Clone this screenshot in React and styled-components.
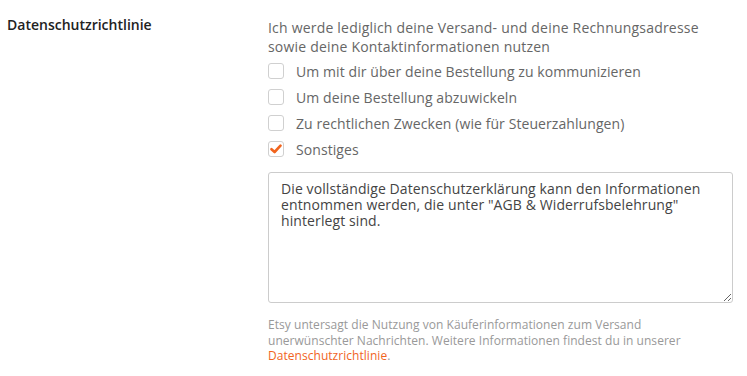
import React, { useState } from "react";
import styled, { createGlobalStyle } from "styled-components";

const GlobalStyle = createGlobalStyle`
  html, body {
    margin: 0;
    padding: 0;
    background: #fff;
  }
  body {
    font-family: "Open Sans", "Liberation Sans", sans-serif;
  }
`;

const Section = styled.div`
  display: grid;
  grid-template-columns: 268px 465px;
  padding-top: 16px;
`;

const Label = styled.div`
  padding-left: 7px;
  font-size: 14px;
  font-weight: 600;
  color: #222;
  line-height: 18px;
`;

const Field = styled.div`
  display: flex;
  flex-direction: column;
`;

const Intro = styled.p`
  margin: 2px 0 0;
  font-size: 14px;
  line-height: 19px;
  letter-spacing: 0.2px;
  color: #666;
`;

const Options = styled.div`
  display: flex;
  flex-direction: column;
  margin-top: 2px;
`;

const Option = styled.label`
  display: flex;
  align-items: center;
  height: 26px;
  font-size: 14px;
  letter-spacing: 0.08px;
  color: #666;
  cursor: pointer;
`;

const Box = styled.span`
  box-sizing: border-box;
  width: 16px;
  height: 16px;
  margin-right: 12px;
  border: 1px solid #d0d0d0;
  border-radius: 3px;
  display: flex;
  align-items: center;
  justify-content: center;
  background: #fff;
`;

const TextArea = styled.textarea`
  box-sizing: border-box;
  margin-top: 10px;
  width: 465px;
  height: 131px;
  padding: 8px 12px;
  border: 1px solid #ccc;
  border-radius: 3px;
  font-family: inherit;
  font-size: 14px;
  line-height: 16px;
  letter-spacing: 0.1px;
  color: #444;
  resize: vertical;
  outline: none;
`;

const Note = styled.p`
  margin: 14px 0 0;
  width: 440px;
  font-size: 12px;
  line-height: 15.5px;
  letter-spacing: 0.04px;
  color: #999;
`;

const Link = styled.a`
  color: #f1641e;
  text-decoration: none;
`;

const Check = () => (
  <svg width="12" height="10" viewBox="0 0 12 10">
    <path d="M1.5 5.2 L4.6 8 L10.5 1.6" fill="none" stroke="#f1641e" strokeWidth="2.6" strokeLinecap="round" strokeLinejoin="round" />
  </svg>
);

const options = [
  "Um mit dir über deine Bestellung zu kommunizieren",
  "Um deine Bestellung abzuwickeln",
  "Zu rechtlichen Zwecken (wie für Steuerzahlungen)",
  "Sonstiges",
];

export default function App() {
  const [checked, setChecked] = useState([false, false, false, true]);
  const toggle = (i) => setChecked((c) => c.map((v, j) => (j === i ? !v : v)));

  return (
    <>
      <GlobalStyle />
      <Section>
        <Label>Datenschutzrichtlinie</Label>
        <Field>
          <Intro>
            Ich werde lediglich deine Versand- und deine Rechnungsadresse
            <br />
            sowie deine Kontaktinformationen nutzen
          </Intro>
          <Options>
            {options.map((text, i) => (
              <Option key={text} onClick={() => toggle(i)}>
                <Box>{checked[i] && <Check />}</Box>
                {text}
              </Option>
            ))}
          </Options>
          <TextArea
            defaultValue={'Die vollständige Datenschutzerklärung kann den Informationen entnommen werden, die unter "AGB & Widerrufsbelehrung" hinterlegt sind.'}
          />
          <Note>
            Etsy untersagt die Nutzung von Käuferinformationen zum Versand
            unerwünschter Nachrichten. Weitere Informationen findest du in unserer{" "}
            <Link href="#">Datenschutzrichtlinie</Link>.
          </Note>
        </Field>
      </Section>
    </>
  );
}
